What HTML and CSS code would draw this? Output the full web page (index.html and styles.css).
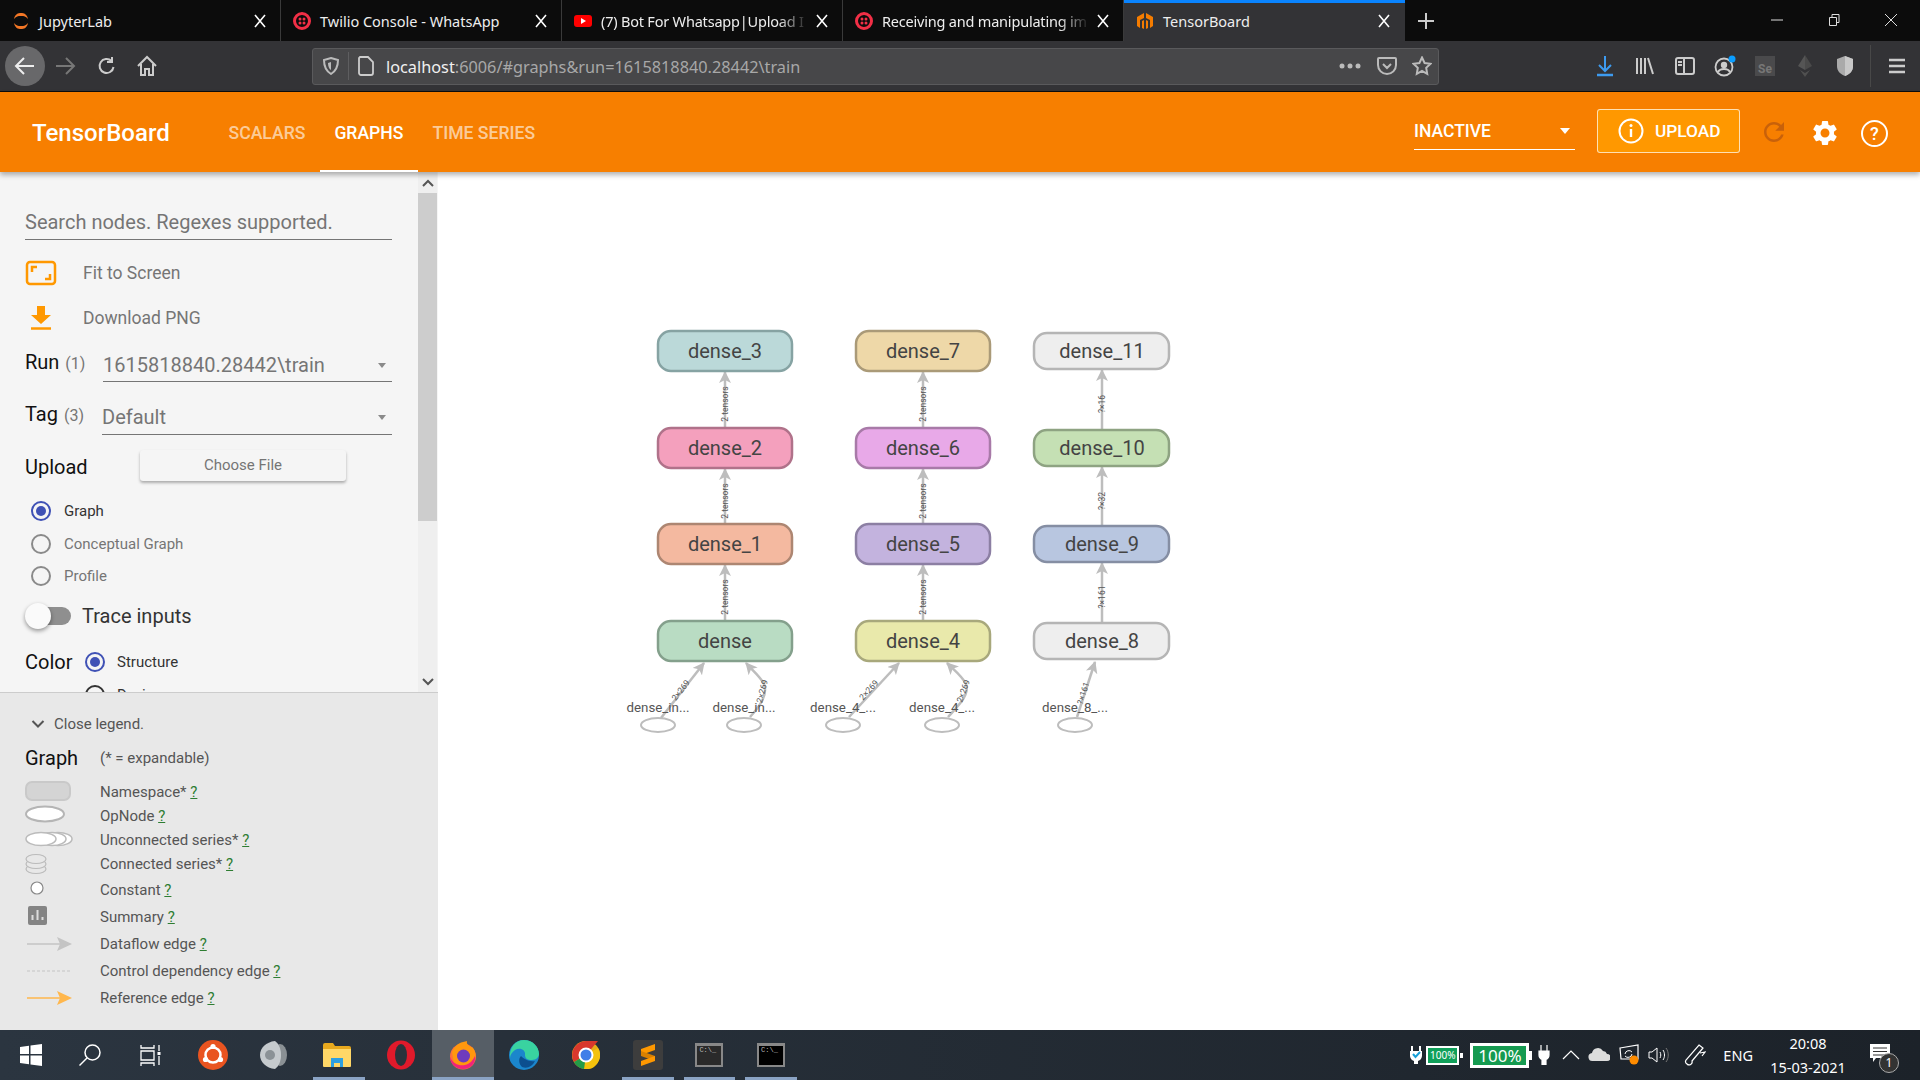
FILE: index.html
```html
<!DOCTYPE html>
<html lang="en">
<head>
  <meta charset="UTF-8" />
  <title>TensorBoard</title>
  <link rel="stylesheet" href="styles.css">
</head>
<body>
  <!-- browser tabs -->
  <div class="tabstrip">
    <div class="tab">
      <svg class="favicon" viewBox="0 0 18 18"><path d="M2 7C3 2 6 1 9 1s6 1 7 6C14 4.500 12 4 9 4S4 4.500 2 7zM2 11c1 5 4 6 7 6s6-1 7-6c-2 2.500-4 3-7 3s-5-.5-7-3z" fill="#f37726"/></svg>
      <span class="tab-title">JupyterLab</span>
      <svg class="tab-x" viewBox="0 0 12 14"><path d="M1 1l10 12M11 1L1 13" stroke="#fff" stroke-width="1.600"/></svg>
    </div>
    <div class="tab">
      <svg class="favicon" viewBox="0 0 18 18"><circle cx="9" cy="9" r="7.500" fill="none" stroke="#f22f46" stroke-width="3"/><circle cx="7" cy="7" r="1.500" fill="#f22f46"/><circle cx="11" cy="7" r="1.500" fill="#f22f46"/><circle cx="7" cy="11" r="1.500" fill="#f22f46"/><circle cx="11" cy="11" r="1.500" fill="#f22f46"/></svg>
      <span class="tab-title">Twilio Console - WhatsApp</span>
      <svg class="tab-x" viewBox="0 0 12 14"><path d="M1 1l10 12M11 1L1 13" stroke="#fff" stroke-width="1.600"/></svg>
    </div>
    <div class="tab">
      <svg class="favicon" viewBox="0 0 18 18"><rect x="0" y="3" width="18" height="12" rx="3" fill="#f00"/><path d="M7 6l5 3-5 3z" fill="#fff"/></svg>
      <span class="tab-title fade">(7) Bot For Whatsapp|Upload I</span>
      <svg class="tab-x" viewBox="0 0 12 14"><path d="M1 1l10 12M11 1L1 13" stroke="#fff" stroke-width="1.600"/></svg>
    </div>
    <div class="tab">
      <svg class="favicon" viewBox="0 0 18 18"><circle cx="9" cy="9" r="7.500" fill="none" stroke="#f22f46" stroke-width="3"/><circle cx="7" cy="7" r="1.500" fill="#f22f46"/><circle cx="11" cy="7" r="1.500" fill="#f22f46"/><circle cx="7" cy="11" r="1.500" fill="#f22f46"/><circle cx="11" cy="11" r="1.500" fill="#f22f46"/></svg>
      <span class="tab-title fade">Receiving and manipulating im</span>
      <svg class="tab-x" viewBox="0 0 12 14"><path d="M1 1l10 12M11 1L1 13" stroke="#fff" stroke-width="1.600"/></svg>
    </div>
    <div class="tab active">
      <svg class="favicon" viewBox="0 0 18 18"><path d="M8 1L1 5v9l3 2V8l4-2zM8 8L6 9v7l2 1zM10 1l7 4v9l-3 2V8l-4-2zM10 8l2 1v7l-2 1z" fill="#f57c00"/></svg>
      <span class="tab-title">TensorBoard</span>
      <svg class="tab-x" viewBox="0 0 12 14"><path d="M1 1l10 12M11 1L1 13" stroke="#fff" stroke-width="1.600"/></svg>
    </div>
    <div class="newtab">
      <svg width="18" height="18" viewBox="0 0 18 18"><path d="M9 1v16M1 9h16" stroke="#ccc" stroke-width="2"/></svg>
    </div>
    <div class="winctl">
      <svg width="14" height="14" viewBox="0 0 14 14"><path d="M1 7h12" stroke="#ddd"/></svg>
      <svg width="14" height="14" viewBox="0 0 14 14"><path d="M2.500 4.500h7v8h-7zM5 4.500V1.500h7v8H9.500" fill="none" stroke="#ddd"/></svg>
      <svg width="14" height="14" viewBox="0 0 14 14"><path d="M1 1l12 12M13 1L1 13" stroke="#ddd"/></svg>
    </div>
  </div>

  <!-- browser toolbar -->
  <div class="toolbar">
    <div class="tool back"><svg width="22" height="22" viewBox="0 0 22 22"><path d="M20 11H3M10 3l-8 8 8 8" fill="none" stroke="#eee" stroke-width="2"/></svg></div>
    <div class="tool"><svg width="22" height="22" viewBox="0 0 22 22"><path d="M2 11h17M12 3l8 8-8 8" fill="none" stroke="#777" stroke-width="2"/></svg></div>
    <div class="tool nudge"><svg width="20" height="20" viewBox="0 0 20 20"><path d="M16.500 11a7 7 0 1 1-2-6M15 1v5h-5" fill="none" stroke="#ccc" stroke-width="2"/></svg></div>
    <div class="tool nudge"><svg width="22" height="22" viewBox="0 0 22 22"><path d="M2 11l9-9 9 9M5 9v11h4v-6h4v6h4V9" fill="none" stroke="#ccc" stroke-width="2"/></svg></div>
    <div class="urlbar">
      <svg class="url-shield" width="16" height="18" viewBox="0 0 16 18"><path d="M8 1l7 2c0 7-2 11-7 14C3 14 1 10 1 3z" fill="none" stroke="#bbb" stroke-width="2"/><path d="M8 5v8c-2-1-3-4-3-7z" fill="#bbb"/></svg>
      <span class="url-sep"></span>
      <svg width="16" height="20" viewBox="0 0 16 20"><path d="M2 1h8l5 5v11a2 2 0 0 1-2 2H3a2 2 0 0 1-2-2V2z" fill="none" stroke="#ccc" stroke-width="1.800"/></svg>
      <span class="url-text"><span class="url-host">localhost</span>:6006/#graphs&amp;run=1615818840.28442\train</span>
      <svg class="url-end" width="22" height="6" viewBox="0 0 22 6"><circle cx="3" cy="3" r="2.500" fill="#bbb"/><circle cx="11" cy="3" r="2.500" fill="#bbb"/><circle cx="19" cy="3" r="2.500" fill="#bbb"/></svg>
      <svg class="url-icon" width="20" height="20" viewBox="0 0 20 20"><path d="M2 2h16a1 1 0 0 1 1 1v6a9 9 0 0 1-18 0V3a1 1 0 0 1 1-1zM6 8l4 4 4-4" fill="none" stroke="#bbb" stroke-width="2"/></svg>
      <svg class="url-icon" width="20" height="20" viewBox="0 0 20 20"><path d="M10 1.500l2.600 5.500 5.900.8-4.300 4.100 1 5.900-5.200-2.900-5.200 2.900 1-5.900L1.500 7.800l5.900-.8z" fill="none" stroke="#bbb" stroke-width="2"/></svg>
    </div>
    <div class="tool-group">
      <div class="tool"><svg width="20" height="22" viewBox="0 0 20 22"><path d="M10 1v14M4 10l6 6 6-6" fill="none" stroke="#3d9bf0" stroke-width="2"/><path d="M2 20h16" stroke="#3d9bf0" stroke-width="2.500"/></svg></div>
      <div class="tool"><svg width="20" height="20" viewBox="0 0 20 20"><path d="M2 2v16M6 2v16M10 2v16M13 2l5 16" stroke="#ccc" stroke-width="2" fill="none"/></svg></div>
      <div class="tool"><svg width="20" height="20" viewBox="0 0 20 20"><rect x="1" y="2" width="18" height="16" rx="2" fill="none" stroke="#ccc" stroke-width="2"/><path d="M9 2v16M3 6h4M3 9h4" stroke="#ccc" stroke-width="2"/></svg></div>
      <div class="tool"><svg width="22" height="22" viewBox="0 0 22 22"><circle cx="10" cy="12" r="8.500" fill="none" stroke="#ccc" stroke-width="1.800"/><circle cx="10" cy="10" r="3.200" fill="#ccc"/><path d="M4 17c2-4 10-4 12 0" fill="none" stroke="#ccc" stroke-width="2"/><circle cx="18" cy="4" r="3.500" fill="#0a9dff"/></svg></div>
      <div class="tool"><span class="se-box">Se</span></div>
      <div class="tool"><svg width="20" height="24" viewBox="0 0 20 24"><path d="M10 1L3 12l7 4z" fill="#555"/><path d="M10 1l7 11-7 4z" fill="#4a4a4a"/><path d="M5 16l5 7 5-7-5 3z" fill="#505050"/></svg></div>
      <div class="tool"><svg width="18" height="22" viewBox="0 0 18 22"><path d="M9 1l8 3v7c0 5-3 8-8 10-5-2-8-5-8-10V4z" fill="#aaa"/><path d="M9 1l8 3v7c0 5-3 8-8 10z" fill="#c8c8c8"/></svg></div>
      <span class="tool-sep"></span>
      <div class="tool menu"><svg width="18" height="16" viewBox="0 0 18 16"><path d="M1 2h16M1 8h16M1 14h16" stroke="#ccc" stroke-width="2.400"/></svg></div>
    </div>
  </div>

  <!-- tensorboard header -->
  <header class="tb-header">
    <div class="tb-brand">TensorBoard</div>
    <nav class="tb-nav">
      <a class="tb-tab">Scalars</a>
      <a class="tb-tab current">Graphs</a>
      <a class="tb-tab">Time Series</a>
    </nav>
    <div class="tb-right">
      <div class="tb-select"><span>INACTIVE</span><i class="caret-white"></i></div>
      <button class="tb-upload">
        <svg width="26" height="26" viewBox="0 0 26 26"><circle cx="13" cy="13" r="11.500" fill="none" stroke="#fff" stroke-width="2"/><path d="M13 11v8" stroke="#fff" stroke-width="2.400"/><circle cx="13" cy="7.500" r="1.500" fill="#fff"/></svg>
        UPLOAD
      </button>
      <svg class="tb-reload" width="30" height="30" viewBox="0 0 24 24"><path fill="#c8610a" d="M17.650 6.350C16.200 4.900 14.210 4 12 4c-4.420 0-7.990 3.580-7.990 8s3.570 8 7.990 8c3.730 0 6.840-2.550 7.730-6h-2.080c-.82 2.330-3.040 4-5.650 4-3.310 0-6-2.690-6-6s2.690-6 6-6c1.660 0 3.140.69 4.220 1.780L13 11h7V4l-2.350 2.350z"/></svg>
      <svg class="tb-gear" width="30" height="30" viewBox="0 0 24 24"><path fill="#fff" d="M19.140 12.940c.04-.3.06-.61.06-.94 0-.32-.02-.64-.07-.94l2.030-1.580a.49.490 0 0 0 .12-.61l-1.920-3.320a.488.488 0 0 0-.59-.22l-2.390.96c-.5-.38-1.030-.7-1.620-.94l-.36-2.540a.484.484 0 0 0-.48-.41h-3.840c-.24 0-.43.17-.47.41l-.36 2.540c-.59.24-1.130.57-1.620.94l-2.390-.96c-.22-.08-.47 0-.59.22L2.740 8.870c-.12.21-.08.47.12.61l2.030 1.580c-.05.3-.09.63-.09.94s.02.64.07.94l-2.030 1.580a.49.490 0 0 0-.12.61l1.920 3.320c.12.22.37.29.59.22l2.390-.96c.5.38 1.030.7 1.620.94l.36 2.540c.05.24.24.41.48.41h3.840c.24 0 .44-.17.47-.41l.36-2.540c.59-.24 1.130-.56 1.620-.94l2.390.96c.22.08.47 0 .59-.22l1.920-3.320c.12-.22.07-.47-.12-.61l-2.010-1.580zM12 15.600c-1.980 0-3.600-1.620-3.600-3.600s1.620-3.600 3.600-3.600 3.600 1.620 3.600 3.600-1.620 3.600-3.600 3.600z"/></svg>
      <div class="tb-help">?</div>
    </div>
  </header>

  <div class="main">
    <aside class="sidebar">
      <div class="side-top">
        <div class="side-scroll">
          <div class="search">Search nodes. Regexes supported.</div>

          <div class="action first">
            <svg width="32" height="26" viewBox="0 0 32 26"><rect x="2" y="2" width="28" height="22" rx="3" fill="none" stroke="#ff9800" stroke-width="2.500"/><path d="M7 12V7h5M25 14v5h-5" fill="none" stroke="#ff9800" stroke-width="2.500"/></svg>
            <span>Fit to Screen</span>
          </div>
          <div class="action">
            <svg width="32" height="26" viewBox="0 0 32 26"><path d="M12 1h8v9h6L16 19 6 10h6z" fill="#ff9800"/><path d="M6 23.500h20" stroke="#ff9800" stroke-width="2.500"/></svg>
            <span>Download PNG</span>
          </div>

          <div class="field run">
            <div class="field-label">Run <small>(1)</small></div>
            <div class="field-select">1615818840.28442\train<i class="caret"></i></div>
          </div>
          <div class="field tag">
            <div class="field-label">Tag <small>(3)</small></div>
            <div class="field-select">Default<i class="caret"></i></div>
          </div>

          <div class="upload-row">
            <div class="upload-label">Upload</div>
            <button class="choose">Choose File</button>
          </div>

          <div class="radios">
            <div class="radio-row on"><i class="radio"></i>Graph</div>
            <div class="radio-row"><i class="radio"></i>Conceptual Graph</div>
            <div class="radio-row"><i class="radio"></i>Profile</div>
          </div>

          <div class="trace">
            <div class="toggle"><i class="knob"></i></div>
            <span>Trace inputs</span>
          </div>

          <div class="color-row">
            <div class="color-label">Color</div>
            <div class="color-opts">
              <div class="radio-row on"><i class="radio"></i>Structure</div>
              <div class="radio-row dark"><i class="radio"></i>Device</div>
            </div>
          </div>
        </div>
        <div class="scrollbar">
          <div class="sb-btn"><svg width="12" height="8" viewBox="0 0 12 8"><path d="M1 7l5-5 5 5" fill="none" stroke="#555" stroke-width="2"/></svg></div>
          <div class="sb-track"><div class="sb-thumb"></div></div>
          <div class="sb-btn"><svg width="12" height="8" viewBox="0 0 12 8"><path d="M1 1l5 5 5-5" fill="none" stroke="#555" stroke-width="2"/></svg></div>
        </div>
      </div>

      <div class="legend">
        <div class="legend-close">
          <svg width="14" height="10" viewBox="0 0 14 10"><path d="M1.500 2L7 7.500 12.500 2" fill="none" stroke="#555" stroke-width="2"/></svg>
          Close legend.
        </div>
        <div class="legend-head"><b>Graph</b><span>(* = expandable)</span></div>

        <div class="legend-row"><svg class="lg" viewBox="0 0 50 24"><rect x="1" y="2" width="44" height="18" rx="6" fill="#d4d4d4" stroke="#c9c9c9" stroke-width="2"/></svg>Namespace* <a>?</a></div>
        <div class="legend-row"><svg class="lg" viewBox="0 0 50 24"><ellipse cx="20" cy="10" rx="19" ry="7.500" fill="#fff" stroke="#b5b5b5" stroke-width="2"/></svg>OpNode <a>?</a></div>
        <div class="legend-row"><svg class="lg" viewBox="0 0 50 24"><ellipse cx="33" cy="11" rx="14" ry="6.500" fill="#fff" stroke="#bbb" stroke-width="1.500"/><ellipse cx="27" cy="11" rx="14" ry="6.500" fill="#fff" stroke="#bbb" stroke-width="1.500"/><ellipse cx="16" cy="11" rx="15" ry="6.500" fill="#fff" stroke="#bbb" stroke-width="1.500"/></svg>Unconnected series* <a>?</a></div>
        <div class="legend-row"><svg class="lg" viewBox="0 0 50 24"><ellipse cx="11" cy="17" rx="10" ry="4.500" fill="#e8e8e8" stroke="#bbb" stroke-width="1.200"/><ellipse cx="11" cy="12" rx="10" ry="4.500" fill="#e8e8e8" stroke="#bbb" stroke-width="1.200"/><ellipse cx="11" cy="7" rx="10" ry="4.500" fill="#e8e8e8" stroke="#bbb" stroke-width="1.200"/></svg>Connected series* <a>?</a></div>
        <div class="legend-row tall"><svg class="lg" viewBox="0 0 50 24"><circle cx="12" cy="10" r="6" fill="#fff" stroke="#888" stroke-width="1.200"/></svg>Constant <a>?</a></div>
        <div class="legend-row tall"><svg class="lg" viewBox="0 0 50 24"><rect x="3" y="1" width="19" height="19" rx="2" fill="#848484"/><path d="M7.500 15v-5M12.500 15V5M17.500 15v-3" stroke="#ddd" stroke-width="2"/></svg>Summary <a>?</a></div>
        <div class="legend-row tall"><svg class="lg" viewBox="0 0 50 24"><path d="M2 12h36" stroke="#c4c4c4" stroke-width="1.500"/><path d="M32 5l15 7-15 7 3-7z" fill="#c4c4c4"/></svg>Dataflow edge <a>?</a></div>
        <div class="legend-row tall"><svg class="lg" viewBox="0 0 50 24"><path d="M2 12h45" stroke="#c4c4c4" stroke-width="1.200" stroke-dasharray="3 2"/></svg>Control dependency edge <a>?</a></div>
        <div class="legend-row tall"><svg class="lg" viewBox="0 0 50 24"><path d="M2 12h36" stroke="#ffb74d" stroke-width="1.500"/><path d="M32 5l15 7-15 7 3-7z" fill="#ffb74d"/></svg>Reference edge <a>?</a></div>
      </div>
    </aside>

    <!-- graph canvas, coordinates are screen pixels -->
    <svg class="graph" viewBox="438 172 1482 858">
      <defs>
        <marker id="arrow" viewBox="0 0 12 12" refX="11" refY="6" markerWidth="12" markerHeight="12" markerUnits="userSpaceOnUse" orient="auto">
          <path d="M0 0L12 6 0 12 3 6z" fill="#bdbdbd"/>
        </marker>
      </defs>

      <g class="edges">
        <path d="M725 427V372" marker-end="url(#arrow)"/>
        <path d="M725 523V469" marker-end="url(#arrow)"/>
        <path d="M725 620V565" marker-end="url(#arrow)"/>
        <path d="M923 427V372" marker-end="url(#arrow)"/>
        <path d="M923 523V469" marker-end="url(#arrow)"/>
        <path d="M923 620V565" marker-end="url(#arrow)"/>
        <path d="M1102 429V370" marker-end="url(#arrow)"/>
        <path d="M1102 525V467" marker-end="url(#arrow)"/>
        <path d="M1102 622V563" marker-end="url(#arrow)"/>
        <path d="M661 718L704 663" marker-end="url(#arrow)"/>
        <path d="M750 717C760 706 768 695 764 684 760 676 752 670 746 663" marker-end="url(#arrow)"/>
        <path d="M849 717L899 663" marker-end="url(#arrow)"/>
        <path d="M948 717C958 706 970 695 966 684 962 676 954 670 947 663" marker-end="url(#arrow)"/>
        <path d="M1077 717L1095 662" marker-end="url(#arrow)"/>
      </g>

      <g class="edge-labels">
        <text transform="translate(728 404) rotate(-90)">2 tensors</text>
        <text transform="translate(728 501) rotate(-90)">2 tensors</text>
        <text transform="translate(728 597) rotate(-90)">2 tensors</text>
        <text transform="translate(926 404) rotate(-90)">2 tensors</text>
        <text transform="translate(926 501) rotate(-90)">2 tensors</text>
        <text transform="translate(926 597) rotate(-90)">2 tensors</text>
        <text transform="translate(1105 404) rotate(-90)">?×16</text>
        <text transform="translate(1105 501) rotate(-90)">?×32</text>
        <text transform="translate(1105 597) rotate(-90)">?×161</text>
        <text transform="translate(683 692) rotate(-52)">2×269</text>
        <text transform="translate(765 692) rotate(-75)">2×269</text>
        <text transform="translate(871 692) rotate(-48)">2×269</text>
        <text transform="translate(966 692) rotate(-70)">2×269</text>
        <text transform="translate(1086 694) rotate(-72)">?×161</text>
      </g>

      <g class="node n-teal"><rect x="658" y="331" width="134" height="40" rx="13"/><text x="725" y="358">dense_3</text></g>
      <g class="node n-pink"><rect x="658" y="428" width="134" height="40" rx="13"/><text x="725" y="455">dense_2</text></g>
      <g class="node n-salmon"><rect x="658" y="524" width="134" height="40" rx="13"/><text x="725" y="551">dense_1</text></g>
      <g class="node n-green"><rect x="658" y="621" width="134" height="40" rx="13"/><text x="725" y="648">dense</text></g>

      <g class="node n-sand"><rect x="856" y="331" width="134" height="40" rx="13"/><text x="923" y="358">dense_7</text></g>
      <g class="node n-orchid"><rect x="856" y="428" width="134" height="40" rx="13"/><text x="923" y="455">dense_6</text></g>
      <g class="node n-violet"><rect x="856" y="524" width="134" height="40" rx="13"/><text x="923" y="551">dense_5</text></g>
      <g class="node n-lime"><rect x="856" y="621" width="134" height="40" rx="13"/><text x="923" y="648">dense_4</text></g>

      <g class="node n-grey"><rect x="1034" y="333" width="135" height="36" rx="13"/><text x="1102" y="358">dense_11</text></g>
      <g class="node n-leaf"><rect x="1034" y="430" width="135" height="36" rx="13"/><text x="1102" y="455">dense_10</text></g>
      <g class="node n-blue"><rect x="1034" y="526" width="135" height="36" rx="13"/><text x="1102" y="551">dense_9</text></g>
      <g class="node n-grey"><rect x="1034" y="623" width="135" height="36" rx="13"/><text x="1102" y="648">dense_8</text></g>

      <g class="input-op">
        <ellipse cx="658" cy="725" rx="17" ry="7"/>
        <ellipse cx="744" cy="725" rx="17" ry="7"/>
        <ellipse cx="843" cy="725" rx="17" ry="7"/>
        <ellipse cx="942" cy="725" rx="17" ry="7"/>
        <ellipse cx="1075" cy="725" rx="17" ry="7"/>
      </g>
      <g class="input-label">
        <text x="658" y="712">dense_in...</text>
        <text x="744" y="712">dense_in...</text>
        <text x="843" y="712">dense_4_...</text>
        <text x="942" y="712">dense_4_...</text>
        <text x="1075" y="712">dense_8_...</text>
      </g>
    </svg>
  </div>

  <!-- windows taskbar -->
  <footer class="taskbar">
    <div class="task"><svg width="24" height="24" viewBox="0 0 24 24"><path d="M1 4l9-1.300V11H1zM11.500 2.500L23 1v10H11.500zM1 12.500h9v8.800l-9-1.300zM11.500 12.500H23V23l-11.500-1.500z" fill="#fff"/></svg></div>
    <div class="task shift-a"><svg width="24" height="24" viewBox="0 0 24 24"><circle cx="14.500" cy="9.500" r="7.500" fill="none" stroke="#fff" stroke-width="1.500"/><path d="M9 15l-7.500 7.500" stroke="#fff" stroke-width="1.500"/></svg></div>
    <div class="task shift-b"><svg width="24" height="24" viewBox="0 0 24 24"><path d="M2 2v3h13V2M2 8h13v9H2zM2 23v-3h13v3M20 2v6M20 13v9" fill="none" stroke="#fff" stroke-width="1.300"/><rect x="18.500" y="9" width="3" height="3" fill="#fff"/></svg></div>
    <div class="task shift-a"><svg width="30" height="30" viewBox="0 0 30 30"><circle cx="15" cy="15" r="15" fill="#e95420"/><circle cx="15" cy="15" r="7.500" fill="none" stroke="#fff" stroke-width="2.500"/><circle cx="15" cy="6.500" r="2.600" fill="#fff"/><circle cx="7.500" cy="19.500" r="2.600" fill="#fff"/><circle cx="22.500" cy="19.500" r="2.600" fill="#fff"/></svg></div>
    <div class="task shift-b"><svg width="30" height="30" viewBox="0 0 30 30"><ellipse cx="21" cy="15" rx="7" ry="11" fill="#8a9094"/><path d="M16 1C7 2 1 8 1 15s6 13 15 14c4-3 6-8 6-14S20 4 16 1z" fill="#c5cacd"/><circle cx="11" cy="15" r="5" fill="#8b9296"/></svg></div>
    <div class="task running shift-a"><svg width="28" height="26" viewBox="0 0 28 26"><path d="M0 3a2 2 0 0 1 2-2h8l2 3h14a2 2 0 0 1 2 2v18H0z" fill="#e8a91e"/><path d="M0 7h28v17a1 1 0 0 1-1 1H1a1 1 0 0 1-1-1z" fill="#ffd767"/><path d="M8 25v-9h12v9h-3v-4h-6v4z" fill="#2d9fe0"/></svg></div>
    <div class="task"><svg width="30" height="30" viewBox="0 0 30 30"><ellipse cx="15" cy="15" rx="14" ry="14.500" fill="#e01a2b"/><ellipse cx="15" cy="15" rx="6" ry="11" fill="#2a333c"/></svg></div>
    <div class="task running active"><svg width="30" height="30" viewBox="0 0 30 30"><circle cx="15" cy="16.500" r="13" fill="#ff7139"/><path d="M4 12C8 3 14 2 19 1c-1 4 3 5 6 7 4 5 3 13-2 17-6 4-13 3-17-1z" fill="#ff980e"/><path d="M15 29c-8 0-13-6-13-12 3 7 9 9 15 8 5-1 8-5 10-9 1 7-4 13-12 13z" fill="#f1247a"/><circle cx="15.500" cy="16" r="6.500" fill="#6e3bbd"/></svg></div>
    <div class="task"><svg width="30" height="30" viewBox="0 0 30 30"><circle cx="15" cy="15" r="15" fill="#1b86cc"/><path d="M15 0c9 0 15 7 15 14 0 3-3 6-7 6-5 0-7-2-7-5 1-5-5-8-10-5-3 2-5 5-5 8C0 8 6 0 15 0z" fill="#39d3a0"/><path d="M13 27c-3-3-4-8-1-11 3 3 8 6 14 5-3 6-8 8-13 6z" fill="#0c4f8f"/></svg></div>
    <div class="task"><svg width="28" height="28" viewBox="0 0 28 28"><circle cx="14" cy="14" r="14" fill="#e6ad19"/><path d="M14 14L2 21A14 14 0 0 1 14 0h12z" fill="#d8382d"/><path d="M14 14l12-7a14 14 0 0 1-14 21z" fill="#f4c20d"/><path d="M14 14L2 21a14 14 0 0 0 10 7z" fill="#249b48"/><circle cx="14" cy="14" r="6.500" fill="#3f7ee8" stroke="#fff" stroke-width="2"/></svg></div>
    <div class="task running"><svg width="30" height="30" viewBox="0 0 30 30"><rect width="30" height="30" rx="3" fill="#3d3d3d"/><path d="M8 9L22 4V10L8 15z" fill="#ff9800"/><path d="M8 11L22 16V21L8 16z" fill="#d98000"/><path d="M8 21L22 16V21L8 26z" fill="#ff9800"/></svg></div>
    <div class="task running"><div class="console"><span>C:\_</span></div></div>
    <div class="task running"><div class="console black"><span>C:\_</span></div></div>

    <div class="tray">
      <svg class="tray-plug" width="14" height="20" viewBox="0 0 14 20"><path d="M1 6h12v5a6 6 0 0 1-4 5v3H5v-3a6 6 0 0 1-4-5z" fill="#fff"/><path d="M3 6V1M11 6V1" stroke="#fff" stroke-width="2"/><path d="M4 9l2.500 3L11 7" fill="none" stroke="#19a0d8" stroke-width="2"/></svg>
      <div class="batt small"><span>100%</span></div>
      <div class="batt big"><span>100%</span></div>
      <svg class="tray-i plug" width="12" height="20" viewBox="0 0 12 20"><path d="M1 6h10v4a5 5 0 0 1-3 4.500V20H4v-5.500A5 5 0 0 1 1 10zM3 6V0M9 6V0" fill="#fff" stroke="#fff" stroke-width="1.200"/></svg>
      <svg class="tray-i chev" width="18" height="10" viewBox="0 0 18 10"><path d="M1 9l8-8 8 8" fill="none" stroke="#fff" stroke-width="1.200"/></svg>
      <svg class="tray-i cloud" width="22" height="14" viewBox="0 0 22 14"><path d="M5 13a4 4 0 0 1-1-8 6 6 0 0 1 11-2 4.500 4.500 0 0 1 4 3 3.500 3.500 0 0 1 0 7z" fill="#dcdcdc"/></svg>
      <svg class="tray-i sync" width="22" height="22" viewBox="0 0 22 22"><path d="M2 4l18-3v14H3z" fill="none" stroke="#fff" stroke-width="1.200"/><path d="M7 10a4 4 0 0 1 7-2M14 10a4 4 0 0 1-7 2" fill="none" stroke="#fff"/><circle cx="16" cy="16" r="4.500" fill="#ff8c00"/></svg>
      <svg class="tray-i vol" width="22" height="18" viewBox="0 0 22 18"><path d="M1 6h3l5-4v14l-5-4H1z" fill="none" stroke="#fff"/><path d="M12 6c1 2 1 4 0 6M15 4c2 3 2 7 0 10" fill="none" stroke="#fff"/><path d="M18 2c3 4 3 10 0 14" fill="none" stroke="#777"/></svg>
      <svg class="tray-i pen" width="22" height="22" viewBox="0 0 22 22"><path d="M15 1l4 3L8 17a3 3 0 0 1-5 3 3 3 0 0 1-1-4zM16 9l5-1-3 4" fill="none" stroke="#fff" stroke-width="1.200"/></svg>
      <span class="lang">ENG</span>
      <div class="clock"><span>20:08</span><span>15-03-2021</span></div>
      <div class="notif">
        <svg width="20" height="18" viewBox="0 0 20 18"><path d="M0 0h20v14H6l-3 4v-4H0z" fill="#fff"/><path d="M3 4h14M3 7.500h14M3 11h14" stroke="#333"/></svg>
        <span class="notif-badge">1</span>
      </div>
    </div>
  </footer>
</body>
</html>
```
FILE: styles.css
```css
html, body { margin: 0; height: 100%; }
body { width: 1920px; height: 1080px; display: flex; flex-direction: column; overflow: hidden; font-family: Roboto, sans-serif; background: #fff; }
i { display: block; font-style: normal; }

/* browser tabs */
.tabstrip { display: flex; height: 41px; background: #0c0c0c; color: #eee; font-family: "Noto Sans", sans-serif; font-size: 14.5px; flex: none; }
.tab { width: 281px; box-sizing: border-box; border-right: 1px solid #3a3a3a; display: flex; align-items: center; padding: 0 11px 0 12px; flex: none; }
.tab.active { background: #333336; border-top: 3px solid #0a84ff; border-right: 0; padding-bottom: 3px; }
.favicon { width: 18px; height: 18px; flex: none; }
.tab-title { margin-left: 9px; width: 215px; white-space: nowrap; flex: none; }
.tab-title.fade { -webkit-mask-image: linear-gradient(to right, #000 85%, transparent 100%); width: 208px; margin-right: 7px; letter-spacing: -0.2px; }
.tab-x { width: 12px; height: 14px; flex: none; }
.newtab { width: 42px; display: flex; align-items: center; justify-content: center; }
.winctl { margin-left: auto; display: flex; align-items: center; gap: 43px; padding-right: 22px; padding-bottom: 2px; }

/* browser toolbar */
.toolbar { display: flex; align-items: center; height: 50px; background: #333336; border-bottom: 1px solid #0c0c0c; padding-left: 5px; flex: none; }
.tool { width: 40px; height: 40px; display: flex; align-items: center; justify-content: center; flex: none; }
.tool.back { background: #68686a; border-radius: 50%; }
.tool.nudge svg { margin-left: 3px; }
.urlbar { display: flex; align-items: center; width: 1127px; height: 37px; box-sizing: border-box; margin-left: 147px; background: #474749; border: 1px solid #5a5a5c; border-radius: 3px; padding: 0 6px 0 10px; }
.url-sep { width: 1px; height: 28px; background: #5e5e60; margin: 0 9px; }
.url-text { margin-left: 12px; margin-top: 2px; font-family: "Noto Sans", sans-serif; font-size: 16.3px; color: #a8a8a8; white-space: nowrap; }
.url-host { color: #f0f0f0; }
.url-end { margin-left: auto; margin-right: 1px; }
.url-icon { margin-left: 15px; }
.tool-group { display: flex; align-items: center; margin-left: 146px; }
.se-box { width: 20px; height: 20px; background: #4a4a4c; color: #777; font-size: 12px; font-weight: 700; display: flex; align-items: flex-end; justify-content: center; line-height: 14px; }
.tool-sep { width: 1px; height: 42px; background: #484848; margin-left: 5px; }
.tool.menu { margin-left: 6px; }

/* tensorboard header */
.tb-header { display: flex; align-items: stretch; height: 80px; background: #f77f00; color: #fff; flex: none; padding-left: 32px; position: relative; z-index: 2; box-shadow: 0 3px 5px rgba(0,0,0,0.3); }
.tb-brand { font-size: 24px; font-weight: 500; line-height: 82px; width: 182px; }
.tb-nav { display: flex; }
.tb-tab { padding: 0 14.5px; line-height: 82px; font-size: 17.6px; font-weight: 500; text-transform: uppercase; color: rgba(255,255,255,0.62); box-sizing: border-box; }
.tb-tab.current { color: #fff; border-bottom: 2px solid #fff; }
.tb-right { margin-left: auto; display: flex; align-items: center; padding-right: 32px; }
.tb-select { width: 161px; box-sizing: border-box; height: 37px; margin-top: -2px; align-self: center; display: flex; align-items: center; justify-content: space-between; border-bottom: 1px solid #fff; font-size: 17.5px; font-weight: 500; padding-right: 3px; }
.caret-white { border-left: 5px solid transparent; border-right: 5px solid transparent; border-top: 6px solid #fff; margin-right: 2px; }
.tb-upload { margin-left: 22px; margin-top: -2px; width: 143px; height: 44px; background: #ff9800; border: 1px solid rgba(255,255,255,0.7); border-radius: 3px; color: #fff; font: 500 17.3px Roboto, sans-serif; display: flex; align-items: center; gap: 11px; padding: 0 0 0 20px; }
.tb-reload { margin-left: 19px; }
.tb-gear { margin-left: 21px; margin-top: 2px; }
.tb-help { margin-left: 21px; margin-top: 2px; width: 23px; height: 23px; border: 2px solid #fff; border-radius: 50%; text-align: center; line-height: 23px; font-size: 18px; font-weight: 500; }

/* page */
.main { display: flex; flex: 1; min-height: 0; }
.sidebar { width: 438px; flex: none; display: flex; flex-direction: column; background: #f5f5f5; }
.graph { flex: 1; display: block; height: 858px; }

/* sidebar controls */
.side-top { display: flex; height: 520px; flex: none; }
.side-scroll { width: 418px; box-sizing: border-box; overflow: hidden; flex: none; }
.search { margin-left: 25px; width: 367px; padding: 38px 0 5px; line-height: 24px; font-size: 20px; color: #757575; border-bottom: 1px solid #757575; }
.action { display: flex; align-items: center; height: 45px; padding-left: 25px; font-size: 17.5px; color: #757575; }
.action.first { margin-top: 10px; }
.action span { margin-left: 26px; }
.field { display: flex; align-items: flex-end; margin-left: 25px; width: 367px; }
.field.run { height: 42px; }
.field.tag { height: 53px; }
.field-label { font-size: 20px; line-height: 24px; color: #111; flex: none; }
.field.run .field-label { width: 78px; margin-bottom: 6px; }
.field.tag .field-label { width: 77px; margin-bottom: 7px; }
.field-label small { font-size: 16px; color: #757575; margin-left: 1px; }
.field-select { flex: 1; display: flex; justify-content: space-between; align-items: center; font-size: 20px; line-height: 24px; padding-bottom: 4px; color: #757575; border-bottom: 1px solid #757575; }
.field.tag .field-select { padding-bottom: 5px; }
.caret { border-left: 4px solid transparent; border-right: 4px solid transparent; border-top: 5px solid #8a8a8a; margin-right: 6px; }
.upload-row { display: flex; align-items: center; margin-top: 15px; padding-left: 25px; height: 31px; }
.upload-label { width: 115px; font-size: 20px; color: #111; padding-top: 3px; }
.choose { width: 206px; height: 31px; border: 0; border-radius: 3px; background: #f5f5f5; box-shadow: 0 2px 3px rgba(0,0,0,0.3); font: 15px Roboto, sans-serif; color: #757575; padding: 0 0 1px; }
.radios { margin-top: 14px; padding-left: 31px; }
.radio-row { display: flex; align-items: center; height: 32.5px; font-size: 15px; color: #757575; }
.radio { width: 20px; height: 20px; box-sizing: border-box; border: 2px solid #8a8a8a; border-radius: 50%; margin-right: 13px; position: relative; flex: none; }
.radio-row.on { color: #333; }
.radio-row.on .radio { border-color: #3f51b5; }
.radio-row.on .radio::after { content: ""; position: absolute; left: 3px; top: 3px; width: 10px; height: 10px; border-radius: 50%; background: #3f51b5; }
.radio-row.dark { color: #333; }
.radio-row.dark .radio { border-color: #333; }
.trace { display: flex; align-items: center; height: 46px; padding-left: 26px; font-size: 20px; color: #333; }
.toggle { width: 45px; height: 18px; border-radius: 9px; background: #8f8f8f; position: relative; }
.knob { position: absolute; left: -1px; top: -4px; width: 26px; height: 26px; border-radius: 50%; background: #fafafa; box-shadow: 0 2px 4px rgba(0,0,0,0.4); }
.trace span { margin-left: 11px; }
.color-row { display: flex; margin-top: 7px; padding-left: 25px; }
.color-label { width: 60px; font-size: 20px; color: #111; line-height: 33px; }
.color-opts .radio-row { height: 33px; }
.color-opts .radio { margin-right: 12px; }

.scrollbar { width: 19px; background: #efefef; display: flex; flex-direction: column; border-right: 1px solid #f5f5f5; flex: none; }
.sb-btn { height: 21px; display: flex; align-items: center; justify-content: center; flex: none; }
.sb-track { flex: 1; }
.sb-thumb { height: 328px; background: #cdcdcd; }

/* legend */
.legend { flex: 1; background: #e8e8e8; border-top: 1px solid #ccc; padding: 18px 0 0 25px; color: #555; font-size: 15px; }
.legend-close { display: flex; align-items: center; height: 26px; padding-left: 6px; gap: 9px; }
.legend-head { display: flex; align-items: center; height: 42px; padding-bottom: 1px; }
.legend-head b { font-weight: 400; font-size: 20px; color: #111; width: 75px; }
.legend-row { display: flex; align-items: center; height: 24px; white-space: pre; }
.legend-row.tall { height: 27px; }
.legend-row a { color: #2e7d32; text-decoration: underline; }
.lg { width: 50px; height: 24px; margin-right: 25px; flex: none; }

/* graph */
.edges path { fill: none; stroke: #bdbdbd; stroke-width: 2.5; }
.edge-labels text { font-size: 8.5px; fill: #555; text-anchor: middle; font-family: Roboto, sans-serif; }
.node rect { stroke-width: 2.5; }
.node text { font-size: 20px; fill: #444; text-anchor: middle; font-family: Roboto, sans-serif; }
.n-teal rect { fill: #bbd9d9; stroke: #86a3a3; }
.n-pink rect { fill: #f4a0bd; stroke: #b0728a; }
.n-salmon rect { fill: #f4b9a0; stroke: #ad8672; }
.n-green rect { fill: #b9dcc3; stroke: #84a08c; }
.n-sand rect { fill: #eed8a8; stroke: #aa9a78; }
.n-orchid rect { fill: #e8a9e8; stroke: #a87aa8; }
.n-violet rect { fill: #c3b3de; stroke: #8c7fa3; }
.n-lime rect { fill: #e9e9ab; stroke: #a8a87c; }
.n-grey rect { fill: #eee; stroke: #b5b5b5; }
.n-leaf rect { fill: #c5e0b4; stroke: #8ea382; }
.n-blue rect { fill: #b8c6e0; stroke: #858ea3; }
.input-op ellipse { fill: #fff; stroke: #bdbdbd; stroke-width: 2; }
.input-label text { font-size: 13.3px; fill: #555; text-anchor: middle; font-family: Roboto, sans-serif; }

/* taskbar */
.taskbar { display: flex; height: 50px; flex: none; background: linear-gradient(to right, #2b3540, #1c2229); color: #fff; }
.task { width: 61.7px; height: 50px; box-sizing: border-box; display: flex; align-items: center; justify-content: center; flex: none; position: relative; }
.task.active { background: #565e66; }
.task.shift-a > svg { margin-right: 5px; }
.task.shift-b > svg { margin-right: 7px; }
.task.running::after { content: ""; position: absolute; left: 5px; right: 5px; bottom: 0; height: 3px; background: #8aa3c4; }
.task.active::after { left: 0; right: 0; }
.console { width: 28px; height: 24px; background: #2a2a2a; border: 2px solid #888; border-top-width: 3px; font: 7px "Liberation Mono", monospace; color: #bbb; padding-left: 2px; box-sizing: border-box; }
.console.black { background: #000; }
.tray { margin-left: auto; display: flex; align-items: center; position: relative; padding-right: 26px; font-family: "Noto Sans", sans-serif; }
.tray-plug { margin-right: 3px; position: relative; z-index: 1; }
.batt { box-sizing: border-box; display: flex; align-items: center; justify-content: center; background: #11a05a; border: 3px solid #fff; position: relative; }
.batt::after { content: ""; position: absolute; right: -6px; top: 5px; bottom: 5px; width: 3px; background: #fff; }
.batt.small { width: 33px; height: 19px; border-width: 2px; font-size: 10px; margin-right: 11px; }
.batt.big { width: 59px; height: 25px; font-size: 17px; background: #159a50; }
.tray-i.plug { margin-left: 9px; }
.tray-i.chev { margin-left: 12px; }
.tray-i.cloud { margin-left: 8px; }
.tray-i.sync { margin-left: 8px; }
.tray-i.vol { margin-left: 8px; }
.tray-i.pen { margin-left: 14px; }
.lang { margin-left: 17px; font-size: 14.5px; }
.clock { display: flex; flex-direction: column; align-items: center; font-size: 14.5px; line-height: 24px; margin-left: 16px; width: 78px; }
.notif { position: relative; margin-left: 23px; width: 24px; }
.notif-badge { position: absolute; left: 9px; top: 9px; width: 20px; height: 20px; box-sizing: border-box; border: 1px solid #aaa; border-radius: 50%; background: #333; font-size: 12px; text-align: center; line-height: 18px; }
```
